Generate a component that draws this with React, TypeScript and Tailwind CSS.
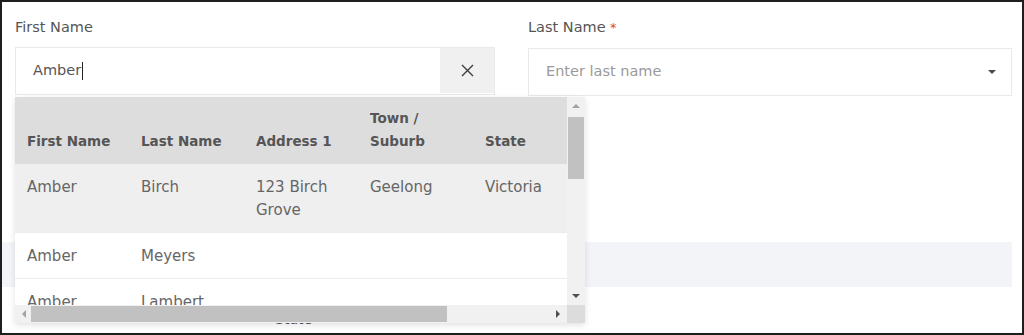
import React from "react";

const font = "font-['DejaVu_Sans',_'Liberation_Sans',_sans-serif]";

type Row = { first: string; last: string; address: React.ReactNode; town: string; state: string; active?: boolean };

const rows: Row[] = [
  { first: "Amber", last: "Birch", address: <>123 Birch<br />Grove</>, town: "Geelong", state: "Victoria", active: true },
  { first: "Amber", last: "Meyers", address: "", town: "", state: "" },
  { first: "Amber", last: "Lambert", address: "", town: "", state: "" },
];

const Tri: React.FC<{ dir: "up" | "down" | "left" | "right"; color: string }> = ({ dir, color }) => {
  const pts = {
    up: "0,4 4,0 8,4",
    down: "0,0 8,0 4,4",
    left: "4,0 4,8 0,4",
    right: "0,0 4,4 0,8",
  }[dir];
  const w = dir === "up" || dir === "down" ? 8 : 4;
  const h = dir === "up" || dir === "down" ? 4 : 8;
  return (
    <svg width={w} height={h} viewBox={`0 0 ${w} ${h}`}>
      <polygon points={pts} fill={color} />
    </svg>
  );
};

const Dropdown: React.FC = () => {
  return (
    <div className="absolute left-[13px] top-[95px] w-[570px] h-[226px] bg-white shadow-[0_2px_6px_rgba(0,0,0,0.12)] flex flex-col">
      <div className="flex h-[208px]">
        <div className="w-[552px] overflow-hidden">
          <div className="w-[690px] text-[15px] text-[#666]">
            <div className="flex h-[67px] bg-[#dedddd] items-end pb-[11px] font-bold text-[#555] text-[13.5px] leading-[23px]">
              <div className="w-[114px] pl-3">First Name</div>
              <div className="w-[115px] pl-3">Last Name</div>
              <div className="w-[114px] pl-3">Address 1</div>
              <div className="w-[115px] pl-3">Town /<br />Suburb</div>
              <div className="w-[114px] pl-3">State</div>
              <div className="w-[114px] pl-3">Postcode</div>
            </div>
            {rows.map((r, i) => (
              <div
                key={i}
                className={`flex leading-[23px] border-b border-[#ececec] ${r.active ? "bg-[#efefef] pt-[12px] pb-[10px]" : "bg-white pt-[12px] pb-[10px]"}`}
              >
                <div className="w-[114px] pl-3">{r.first}</div>
                <div className="w-[115px] pl-3">{r.last}</div>
                <div className="w-[114px] pl-3">{r.address}</div>
                <div className="w-[115px] pl-3">{r.town}</div>
                <div className="w-[114px] pl-3">{r.state}</div>
                <div className="w-[114px] pl-3"></div>
              </div>
            ))}
          </div>
        </div>
        <div className="w-[18px] bg-[#f1f1f1] flex flex-col items-center">
          <div className="h-[18px] flex items-center justify-center">
            <Tri dir="up" color="#a3a3a3" />
          </div>
          <div className="w-[16px] h-[62px] mt-[2px] bg-[#c1c1c1]" />
          <div className="flex-1" />
          <div className="h-[18px] flex items-center justify-center">
            <Tri dir="down" color="#505050" />
          </div>
        </div>
      </div>
      <div className="flex h-[18px]">
        <div className="w-[552px] bg-[#f1f1f1] flex items-center">
          <div className="w-[16px] flex justify-center pl-[2px]">
            <Tri dir="left" color="#a3a3a3" />
          </div>
          <div className="w-[416px] h-[16px] bg-[#c1c1c1]" />
          <div className="flex-1" />
          <div className="w-[18px] flex justify-center">
            <Tri dir="right" color="#505050" />
          </div>
        </div>
        <div className="w-[18px] bg-[#dcdcdc]" />
      </div>
    </div>
  );
};

const App: React.FC = () => {
  return (
    <div className={`${font} relative w-[1024px] h-[335px] bg-white border-2 border-[#1e1e1e] overflow-hidden`}>
      <div className="pl-[13px] pt-[15px] flex gap-[33px]">
        <div className="w-[480px]">
          <div className="text-[14.5px] leading-[20px] text-[#555]">First Name</div>
          <div className="mt-[10px] h-[48px] border border-[#e9e9e9] flex items-stretch">
            <div className="flex-1 flex items-center pl-[17px] text-[14.5px] text-[#555]">
              Amber
              <span className="inline-block w-px h-[18px] bg-[#222] ml-px" />
            </div>
            <div className="w-[54px] mb-[1px] bg-[#f0f0f0] flex items-center justify-center">
              <svg width="13" height="13" viewBox="0 0 13 13" fill="none" stroke="#3d3d3d" strokeWidth="1.4">
                <path d="M1 1 L12 12 M12 1 L1 12" />
              </svg>
            </div>
          </div>
        </div>
        <div className="w-[484px]">
          <div className="text-[14.5px] leading-[20px] text-[#555]">
            Last Name <span className="text-[#e53935] text-[12px]">*</span>
          </div>
          <div className="mt-[10px] h-[48px] border border-[#e9e9e9] flex items-center pl-[17px] pr-[15px]">
            <span className="flex-1 text-[14.5px] text-[#9a9a9a]">Enter last name</span>
            <Tri dir="down" color="#4a4a4a" />
          </div>
        </div>
      </div>
      <div className="mt-[146px] w-[1010px] h-[45px] bg-[#f3f4f7]" />
      <div className="mt-[22px] pl-[273px] text-[14px] leading-[20px] text-[#555]">State</div>
      <Dropdown />
    </div>
  );
};

export default App;
